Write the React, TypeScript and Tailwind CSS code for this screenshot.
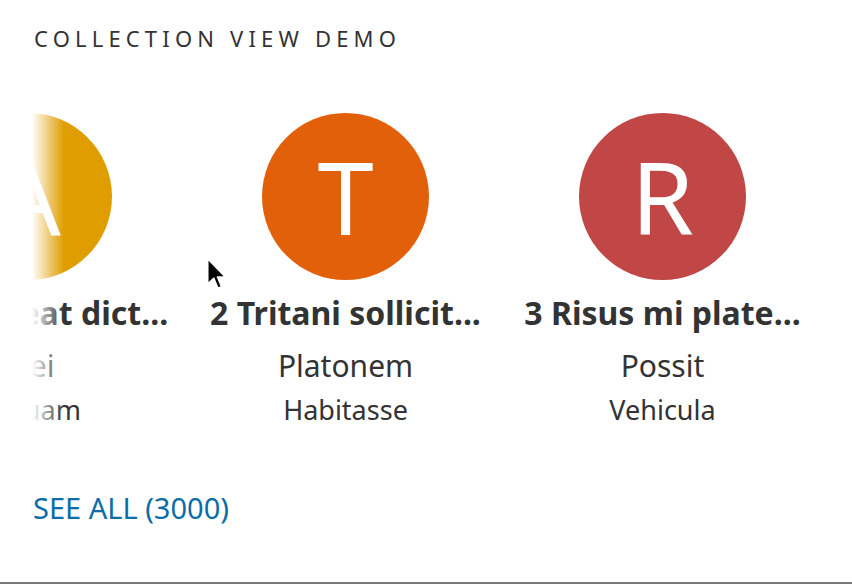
import React from 'react';

type Item = {
  letter: string;
  color: string;
  title: string;
  subtitle: string;
  info: string;
};

const items: Item[] = [
  { letter: 'A', color: 'bg-[#e09d00]', title: '1 Ante neat dict...', subtitle: 'Mei', info: 'Aliquam' },
  { letter: 'T', color: 'bg-[#e3600b]', title: '2 Tritani sollicit...', subtitle: 'Platonem', info: 'Habitasse' },
  { letter: 'R', color: 'bg-[#c14646]', title: '3 Risus mi plate...', subtitle: 'Possit', info: 'Vehicula' },
];

function Card({ item }: { item: Item }) {
  return (
    <div className="w-[317px] shrink-0 flex flex-col items-center">
      <div className={`w-[167px] h-[167px] rounded-full ${item.color} flex items-center justify-center`}>
        <span className="text-white text-[101px] leading-none font-normal">{item.letter}</span>
      </div>
      <div className="mt-[14px] w-[300px] text-center whitespace-nowrap text-[32px] leading-[38px] font-bold text-[#333]">
        {item.title}
      </div>
      <div className="mt-[16px] text-center text-[30px] leading-[36px] text-[#333]">{item.subtitle}</div>
      <div className="mt-[10px] text-center text-[27px] leading-[32px] text-[#333]">{item.info}</div>
    </div>
  );
}

export default function App() {
  return (
    <div
      className="relative h-[584px] w-[852px] overflow-hidden bg-white border-b-2 border-[#7a7a7a]"
      style={{ fontFamily: '"Noto Sans", "Open Sans", sans-serif' }}
    >
      <div className="pt-[24px] pl-[34px] text-[22px] leading-[28px] tracking-[0.235em] text-[#333]">
        COLLECTION VIEW DEMO
      </div>

      <div className="relative mt-[61px] overflow-hidden">
        <div className="flex -ml-[130px]">
          {items.map((it) => (
            <Card key={it.letter} item={it} />
          ))}
        </div>
        <div className="absolute left-0 top-0 bottom-0 w-[64px] bg-[linear-gradient(to_right,white_32px,rgba(255,255,255,0)_64px)]" />
      </div>

      <div className="mt-[65px] pl-[33px] text-[29px] leading-[34px] text-[#0a6ea8]">SEE ALL (3000)</div>

      {/* mouse pointer */}
      <svg className="absolute left-[206px] top-[257px]" width="22" height="34" viewBox="0 0 13 20">
        <path
          d="M1 1 L1 16 L4.6 12.6 L7 18.4 L9.2 17.5 L6.8 11.8 L11.6 11.8 Z"
          fill="#000"
          stroke="#fff"
          strokeWidth="1"
          strokeLinejoin="round"
        />
      </svg>
    </div>
  );
}
